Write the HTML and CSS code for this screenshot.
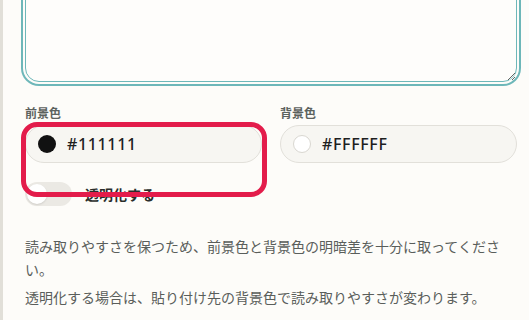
FILE: index.html
```html
<!DOCTYPE html>
<html lang="ja">
<head>
<meta charset="utf-8">
<title>色設定</title>
<link rel="stylesheet" href="styles.css">
</head>
<body>
<div class="page">
  <textarea class="editor" aria-label="テキスト"></textarea>
  <div class="colors">
    <div class="field">
      <span class="label">前景色</span>
      <div class="swatch-input"><span class="dot dot-dark"></span><span class="hex">#111111</span></div>
    </div>
    <div class="field">
      <span class="label">背景色</span>
      <div class="swatch-input"><span class="dot dot-light"></span><span class="hex">#FFFFFF</span></div>
    </div>
  </div>
  <div class="toggle-row">
    <span class="switch"><span class="knob"></span></span>
    <span class="toggle-label">透明化する</span>
  </div>
  <p class="note">読み取りやすさを保つため、前景色と背景色の明暗差を十分に取ってください。</p>
  <p class="note note-second">透明化する場合は、貼り付け先の背景色で読み取りやすさが変わります。</p>
  <div class="highlight"></div>
</div>
</body>
</html>
```

FILE: styles.css
```css
html, body {
  margin: 0;
  padding: 0;
  background: #fdfcf9;
}

body {
  font-family: "Noto Sans CJK JP", "Noto Sans", sans-serif;
  overflow: hidden;
}

.page {
  position: relative;
  display: flow-root;
  box-sizing: border-box;
  min-height: 320px;
  border-left: 3px solid #e1dfd8;
  padding: 0 12px 0 22px;
}

.editor {
  display: block;
  box-sizing: border-box;
  width: 100%;
  height: 102px;
  margin: -20px 0 0;
  border: 1px solid #6db7b9;
  border-radius: 14px;
  box-shadow: 0 0 0 2px #fdfcf9, 0 0 0 4px #6db7b9;
  background: #fefdfb;
  outline: none;
  resize: vertical;
}

.colors {
  display: grid;
  grid-template-columns: 1fr 1fr;
  column-gap: 18px;
  margin-top: 23px;
}

.label {
  display: block;
  font-size: 12px;
  font-weight: 700;
  line-height: 16px;
  color: #5c625e;
  margin-bottom: 4px;
}

.swatch-input {
  display: flex;
  align-items: center;
  gap: 11px;
  box-sizing: border-box;
  height: 38px;
  padding-left: 12px;
  border: 1px solid #e2e0da;
  border-radius: 19px;
  background: #f7f6f2;
}

.dot {
  display: block;
  box-sizing: border-box;
  width: 18px;
  height: 18px;
  border-radius: 50%;
}

.dot-dark {
  background: #111111;
}

.dot-light {
  background: #ffffff;
  border: 1px solid #d9d7d1;
}

.hex {
  font-family: "Noto Sans", "Liberation Sans", sans-serif;
  font-size: 16px;
  font-weight: 500;
  letter-spacing: 0.04em;
  color: #1d201e;
}

.toggle-row {
  display: flex;
  align-items: center;
  gap: 13px;
  margin-top: 19px;
}

.switch {
  display: block;
  box-sizing: border-box;
  width: 47px;
  height: 24px;
  padding: 2px;
  border-radius: 12px;
  background: #ebe9e4;
}

.knob {
  display: block;
  width: 20px;
  height: 20px;
  border-radius: 50%;
  background: #ffffff;
  box-shadow: 0 1px 2px rgba(0, 0, 0, 0.12);
}

.toggle-label {
  font-size: 14px;
  font-weight: 700;
  color: #2a2d2b;
}

.note {
  margin: 29px 0 0;
  font-size: 14px;
  line-height: 23px;
  color: #5a5e5b;
}

.note-second {
  margin-top: 5px;
}

.highlight {
  position: absolute;
  left: 18px;
  top: 122px;
  box-sizing: border-box;
  width: 246px;
  height: 75px;
  border: 5px solid #e31c4b;
  border-radius: 16px;
}
```
